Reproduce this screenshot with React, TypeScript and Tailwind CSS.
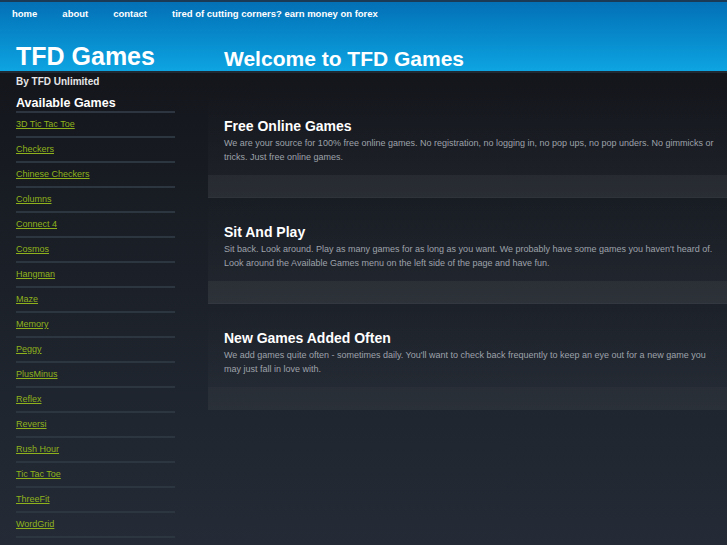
const navLinks = ["home", "about", "contact", "tired of cutting corners? earn money on forex"]

const games = [
  "3D Tic Tac Toe",
  "Checkers",
  "Chinese Checkers",
  "Columns",
  "Connect 4",
  "Cosmos",
  "Hangman",
  "Maze",
  "Memory",
  "Peggy",
  "PlusMinus",
  "Reflex",
  "Reversi",
  "Rush Hour",
  "Tic Tac Toe",
  "ThreeFit",
  "WordGrid",
  "WordHunt",
]

const sections = [
  {
    title: "Free Online Games",
    body: "We are your source for 100% free online games. No registration, no logging in, no pop ups, no pop unders. No gimmicks or tricks. Just free online games.",
  },
  {
    title: "Sit And Play",
    body: "Sit back. Look around. Play as many games for as long as you want. We probably have some games you haven't heard of. Look around the Available Games menu on the left side of the page and have fun.",
  },
  {
    title: "New Games Added Often",
    body: "We add games quite often - sometimes daily. You'll want to check back frequently to keep an eye out for a new game you may just fall in love with.",
  },
]

export default function App() {
  return (
    <div className="min-h-screen h-[545px] overflow-hidden bg-gradient-to-b from-[#111217] via-[#1b2028] to-[#242b36] font-['Liberation_Sans',Arial,sans-serif] text-white">
      {/* Header */}
      <header className="h-[73px] border-t-2 border-b-2 border-t-[#1a3a55] border-b-[#1f2a35] bg-gradient-to-b from-[#0470b6] to-[#0ea4e2]">
        <nav className="flex h-[25px] items-center gap-[25px] pl-3 text-[9.5px] font-bold">
          {navLinks.map(link => (
            <a key={link} className="text-white">{link}</a>
          ))}
        </nav>
        <div className="flex items-end h-[44px] pb-[2px]">
          <div className="w-[208px] pl-4 text-[25px] font-bold leading-none">TFD Games</div>
          <h1 className="pl-4 text-[21px] font-bold leading-none">Welcome to TFD Games</h1>
        </div>
      </header>

      <div className="flex">
        {/* Sidebar */}
        <aside className="w-[208px] shrink-0 pl-4 pr-[33px]">
          <div className="pt-[3px] text-[10px] font-bold leading-[12px] text-[#e6e6e6]">By TFD Unlimited</div>
          <h2 className="mt-[8px] text-[12.5px] font-bold leading-[15px] border-b-2 border-[#2c3540]">Available Games</h2>
          <ul>
            {games.map(game => (
              <li key={game} className="flex h-[25px] items-center border-b-2 border-[#2c3641]">
                <a className="text-[9px] text-[#8fb21c] underline underline-offset-1">{game}</a>
              </li>
            ))}
          </ul>
        </aside>

        {/* Main content */}
        <main className="flex-1 mt-[19px]">
          {sections.map((section, i) => (
            <section key={section.title} className="h-[106px] flex flex-col bg-gradient-to-b from-[#ffffff00] to-[#ffffff08]">
              <div className="flex-1 pl-4 pr-[10px] pt-[25px]">
                <h3 className="text-[14px] font-bold leading-[18px]">{section.title}</h3>
                <p className="mt-[1px] text-[9px] leading-[14px] text-[#9ea2aa]">{section.body}</p>
              </div>
              <div className={i === 2 ? "h-[23px] bg-[#ffffff05]" : "h-[23px] bg-[#ffffff0c] border-b border-[#ffffff08]"}></div>
            </section>
          ))}
        </main>
      </div>
    </div>
  )
}
